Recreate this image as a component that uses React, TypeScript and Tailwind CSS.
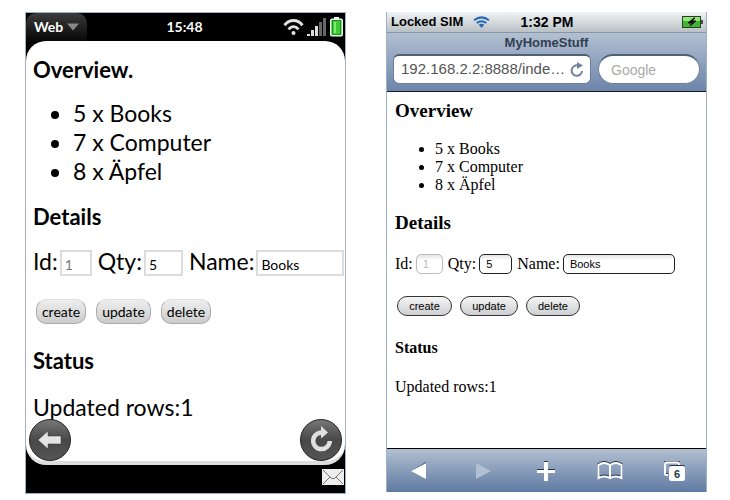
import React, { useState } from "react";

const stock = ["5 x Books", "7 x Computer", "8 x Äpfel"];
const actions = [
  { name: "create", webos: "w-[50px]", ios: "w-[55px]" },
  { name: "update", webos: "w-[55px]", ios: "w-[58px]" },
  { name: "delete", webos: "w-[50px]", ios: "w-[54px]" },
];

function WebOsField({ id, label, value, width, disabled = false }: { id: string; label: string; value: string; width: string; disabled?: boolean }) {
  const [text, setText] = useState(value);
  return (
    <div className="flex items-end">
      <label htmlFor={id} className="mr-0.5">{label}</label>
      <input
        id={id}
        value={text}
        disabled={disabled}
        onChange={(e) => setText(e.target.value)}
        className={`h-[26px] border-2 border-[#dcdcdc] bg-white px-[3px] pt-0.5 text-sm text-black disabled:text-[#777] ${width}`}
      />
    </div>
  );
}

function IosField({ id, label, value, width, disabled = false }: { id: string; label: string; value: string; width: string; disabled?: boolean }) {
  const [text, setText] = useState(value);
  return (
    <div className="flex items-center">
      <label htmlFor={id} className="mr-[3px]">{label}</label>
      <input
        id={id}
        value={text}
        disabled={disabled}
        onChange={(e) => setText(e.target.value)}
        className={`h-5 rounded-[5px] border border-[#222] bg-linear-to-b from-[#e4e4e4] to-white to-30% px-1.5 font-['Liberation_Sans',Arial,sans-serif] text-[11px] text-black disabled:border-[#bbb] disabled:text-[#bbb] ${width}`}
      />
    </div>
  );
}

function WebOsPhone() {
  return (
    <section className="flex min-w-0 flex-1 flex-col border border-[#9db0c6] bg-black font-['Lato',sans-serif] text-black">
      <header className="flex h-7 items-stretch justify-between text-white">
        <div className="flex flex-1">
          <button className="flex items-center gap-1 rounded-t-[10px] bg-linear-to-b from-[#3c3c3c] to-[#080808] px-2 text-sm font-bold">
            Web
            <svg width="12" height="8" viewBox="0 0 12 8" aria-hidden="true"><path d="M0 .5h12L6 7.5z" fill="#888" /></svg>
          </button>
        </div>
        <time className="self-center text-sm font-bold">15:48</time>
        <div className="flex flex-1 items-center justify-end gap-[3px] pr-0.5">
          <svg width="21" height="18" viewBox="0 0 21 18" fill="none" stroke="#e2e2e2" aria-hidden="true">
            <path d="M1.5 7.2C6.5 1 14.5 1 19.5 7.2" strokeWidth="3" />
            <path d="M5.5 11.3c3-3.700 7-3.700 10 0" strokeWidth="2.8" />
            <circle cx="10.5" cy="15" r="2" fill="#e2e2e2" stroke="none" />
          </svg>
          <svg width="20" height="20" viewBox="0 0 20 20" aria-hidden="true">
            <path d="M0 17h3v2H0zM4 13h3v6H4zM8 9h3v10H8z" fill="#ddd" />
            <path d="M12 5h3v14h-3zM16 1h3v18h-3z" fill="#666" />
          </svg>
          <svg width="13" height="20" viewBox="0 0 13 20" aria-hidden="true">
            <path d="M4 0h5v3H4z" fill="#f4f4f4" />
            <rect x=".8" y="2.3" width="11.4" height="16.5" rx="1" fill="#19931a" stroke="#f1fff1" strokeWidth="1.5" />
            <path d="M3 4h7v13H3z" fill="#3ccb34" /><path d="M4 5h2v11H4z" fill="#7df070" />
          </svg>
        </div>
      </header>
      <main className="relative flex h-[424px] flex-col rounded-[20px] border-b-4 border-[#dedede] bg-white px-[7px] pt-3.5 text-[23px] leading-[29px]">
        <h2 className="text-[22px] leading-[29px] font-bold">Overview.</h2>
        <ul className="mt-[15px] mb-4 list-disc pl-10">
          {stock.map((item) => <li key={item}>{item}</li>)}
        </ul>
        <h2 className="text-[22px] leading-[29px] font-bold">Details</h2>
        <form className="mt-4" onSubmit={(e) => e.preventDefault()}>
          <div className="flex gap-1.5 whitespace-nowrap">
            <WebOsField id="w-id" label="Id:" value="1" width="w-8" disabled />
            <WebOsField id="w-qty" label="Qty:" value="5" width="w-[39px]" />
            <WebOsField id="w-name" label="Name:" value="Books" width="w-[88px]" />
          </div>
          <div className="mt-[23px] flex gap-2.5 pl-[3px]">
            {actions.map((a) => (
              <button key={a.name} className={`h-[25px] rounded-[10px] border border-[#aaa] border-t-[#ddd] bg-linear-to-b from-[#eee] to-[#ccc] text-sm ${a.webos}`}>{a.name}</button>
            ))}
          </div>
        </form>
        <h2 className="mt-[22px] text-[22px] leading-[29px] font-bold">Status</h2>
        <p className="mt-[18px]">Updated rows:1</p>
        <button aria-label="Back" className="absolute bottom-0 left-[3px] size-[42px] rounded-full border border-[#222] bg-linear-to-b from-[#777] via-[#484848] to-[#555]">
          <svg viewBox="0 0 40 40" aria-hidden="true"><path d="M8 20 18 11v5h13v8H18v5z" fill="#e4e4e4" stroke="#333" strokeWidth=".5" /></svg>
        </button>
        <button aria-label="Reload" className="absolute right-[3px] bottom-0 size-[42px] rounded-full border border-[#222] bg-linear-to-b from-[#777] via-[#484848] to-[#555]">
          <svg viewBox="0 0 40 40" aria-hidden="true">
            <path d="M21 12.5A8.300 8.300 0 1 0 28.800 21" fill="none" stroke="#e0e0e0" strokeWidth="4.5" />
            <path d="m20 6 7 6.500-7 6z" fill="#e0e0e0" />
          </svg>
        </button>
      </main>
      <footer className="flex h-7 justify-end pt-1 pr-px">
        <svg width="22" height="16" viewBox="0 0 22 16" aria-label="New mail" role="img">
          <path d="M0 0h22v16H0z" fill="#eee" />
          <path d="m1 1 8 8q2 1.500 4 0l8-8M1 15l7-7M21 15l-7-7" fill="none" stroke="#777" />
        </svg>
      </footer>
    </section>
  );
}

function IosPhone() {
  return (
    <section className="flex min-w-0 flex-1 flex-col border-x border-[#9db0c6] bg-white font-['Liberation_Serif','Times_New_Roman',serif] text-black">
      <div className="flex h-5 items-center justify-between bg-linear-to-b from-[#f1f3f4] to-[#b9c1c6] pr-[3px] pl-1 font-['Liberation_Sans',Arial,sans-serif] text-[13px] font-bold">
        <div className="flex flex-1 items-center gap-2.5 whitespace-nowrap">
          Locked SIM
          <svg width="17" height="12" viewBox="0 0 17 12" fill="none" stroke="#2869b5" aria-hidden="true">
            <path d="M1 4.300q7.500-5.800 15 0M3.700 7q4.800-3.600 9.600 0" strokeWidth="2" />
            <path d="M5.700 8.800q2.800-2.200 5.600 0L8.500 12z" fill="#2869b5" stroke="none" />
          </svg>
        </div>
        <time className="text-sm">1:32 PM</time>
        <div className="flex flex-1 justify-end">
          <svg width="21" height="12" viewBox="0 0 21 12" aria-label="Charging" role="img">
            <rect x=".5" y=".5" width="18" height="11" fill="#42b62f" stroke="#293d29" />
            <path d="M1 1h17v4H1z" fill="#91e577" /><path d="M19 4h2v4h-2z" fill="#445044" />
            <path d="m12 2-6 5h4l-2 3 6-5h-4l3-3z" fill="#111" stroke="#111" />
          </svg>
        </div>
      </div>
      <header className="h-[60px] border-t border-b border-t-[#8795a8] border-b-[#151b25] bg-linear-to-b from-[#b3c0d1] to-[#6c85aa] px-1.5 font-['Liberation_Sans',Arial,sans-serif]">
        <h1 className="flex h-[21px] items-center justify-center pb-0.5 text-[13px] font-bold text-[#323e50]">MyHomeStuff</h1>
        <div className="flex gap-[7px]">
          <div className="flex h-[30px] min-w-0 flex-1 items-center rounded-md border border-t-2 border-[#6c7f9a] border-t-[#4f6079] bg-white pr-1.5 pl-[7px]">
            <input aria-label="Address" defaultValue="192.168.2.2:8888/inde…" className="min-w-0 flex-1 text-[15px] text-[#555]" />
            <button aria-label="Reload page">
              <svg width="14" height="16" viewBox="0 0 14 16" aria-hidden="true">
                <path d="M8 3.500A5.200 5.200 0 1 0 12 9" fill="none" stroke="#74839a" strokeWidth="2" /><path d="m7 0 6 3.600L7 7z" fill="#74839a" />
              </svg>
            </button>
          </div>
          <input aria-label="Search" placeholder="Google" className="h-[30px] w-[102px] rounded-full border border-t-2 border-[#6c7f9a] border-t-[#4f6079] bg-white px-3 text-sm placeholder:text-[#aaa]" />
        </div>
      </header>
      <main className="h-[356px] px-2 pt-2 text-base leading-[18px]">
        <h2 className="text-[19px] leading-[21px] font-bold">Overview</h2>
        <ul className="mt-[19px] list-disc pl-10">
          {stock.map((item) => <li key={item}>{item}</li>)}
        </ul>
        <h2 className="mt-[18px] text-[19px] leading-[21px] font-bold">Details</h2>
        <form className="mt-[21px]" onSubmit={(e) => e.preventDefault()}>
          <div className="flex gap-[5px] whitespace-nowrap">
            <IosField id="i-id" label="Id:" value="1" width="w-[27px]" disabled />
            <IosField id="i-qty" label="Qty:" value="5" width="w-[33px]" />
            <IosField id="i-name" label="Name:" value="Books" width="w-28" />
          </div>
          <div className="mt-[22px] flex gap-2 pl-0.5">
            {actions.map((a) => (
              <button key={a.name} className={`h-5 rounded-full border border-[#333] bg-linear-to-b from-[#f5f5f5] to-[#cdcfd2] font-['Liberation_Sans',Arial,sans-serif] text-[11px] leading-4 ${a.ios}`}>{a.name}</button>
            ))}
          </div>
        </form>
        <h3 className="mt-[23px] font-bold">Status</h3>
        <p className="mt-[21px]">Updated rows:1</p>
      </main>
      <nav className="grid h-11 grid-cols-5 place-items-center border-t border-black bg-linear-to-b from-[#b3c0d1] to-[#5f7aa2]">
        <button aria-label="Previous page"><svg width="16" height="18" viewBox="0 0 16 18"><path d="M15 0 0 9h15z" fill="#26364c" /><path d="M15 1v16L0 9z" fill="#fff" /></svg></button>
        <button aria-label="Next page" disabled><svg width="16" height="18" viewBox="0 0 16 18"><path d="M1 1v16l15-8z" fill="#b2c0d3" /></svg></button>
        <button aria-label="Add"><svg width="18" height="20" viewBox="0 0 18 20"><path d="M7 0h4v8h7v4h-7v7H7v-7H0V8h7z" fill="#26364c" /><path d="M7 1h4v8h7v3h-7v8H7v-8H0V9h7z" fill="#fff" /></svg></button>
        <button aria-label="Bookmarks">
          <svg width="26" height="19" viewBox="0 0 26 19" fill="none">
            <path d="M1.500 17V4q5.500-4 11.500 0 6-4 11.500 0v13q-6-3-11.500 0-5.500-3-11.500 0zM13 4v13" stroke="#26364c" strokeWidth="2" transform="translate(0 -1)" />
            <path d="M1.500 17V4q5.500-4 11.500 0 6-4 11.500 0v13q-6-3-11.500 0-5.500-3-11.500 0zM13 4v13" stroke="#fff" strokeWidth="2" />
          </svg>
        </button>
        <button aria-label="6 open pages">
          <svg width="21" height="20" viewBox="0 0 21 20">
            <path d="M4 14H2.500Q1 14 1 12.500V3q0-1.500 1.500-1.500h11Q15 1.500 15 3v1" fill="none" stroke="#26364c" strokeWidth="2" transform="translate(0 -1)" />
            <path d="M4 14H2.500Q1 14 1 12.500V3q0-1.500 1.500-1.500h11Q15 1.500 15 3v1" fill="none" stroke="#fff" strokeWidth="2" />
            <rect x="5" y="4" width="16" height="15" rx="2" fill="#26364c" />
            <rect x="5" y="5" width="16" height="15" rx="2" fill="#fff" />
            <text x="13" y="16.500" textAnchor="middle" fontFamily="Liberation Sans" fontWeight="bold" fontSize="11" fill="#26364c">6</text>
          </svg>
        </button>
      </nav>
    </section>
  );
}

export default function App() {
  return (
    <div className="flex min-h-screen items-start gap-10 bg-white pt-3 pr-[23px] pb-2 pl-[25px]">
      <WebOsPhone />
      <IosPhone />
    </div>
  );
}
